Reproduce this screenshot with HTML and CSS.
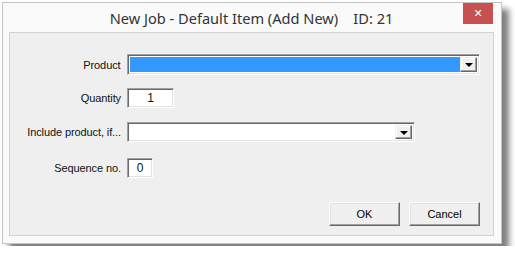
FILE: index.html
```html
<!DOCTYPE html>
<html lang="en">
<head>
    <meta charset="UTF-8">
    <title>New Job - Default Item</title>
    <link rel="stylesheet" href="styles.css">
</head>
<body>
    <div class="window">
        <div class="titlebar">
            <span class="title">New Job - Default Item (Add New)&nbsp;&nbsp;&nbsp;&nbsp;ID: 21</span>
            <button class="close">&#x2715;</button>
        </div>
        <div class="panel">
            <div class="row row1">
                <label>Product</label>
                <div class="combo combo-wide">
                    <div class="combo-val selected"></div>
                    <div class="drop"><span class="arrow"></span></div>
                </div>
            </div>
            <div class="row row2">
                <label>Quantity</label>
                <div class="field field-qty">1</div>
            </div>
            <div class="row row3">
                <label>Include product, if...</label>
                <div class="combo combo-mid">
                    <div class="combo-val"></div>
                    <div class="drop"><span class="arrow"></span></div>
                </div>
            </div>
            <div class="row row4">
                <label>Sequence no.</label>
                <div class="field field-seq">0</div>
            </div>
            <div class="buttons">
                <button class="btn">OK</button>
                <button class="btn">Cancel</button>
            </div>
        </div>
    </div>
</body>
</html>
```

FILE: styles.css
```css
body{
    margin: 0;
    padding: 2px;
    background-color: #fff;
}
.window{
    border: 1px solid #c4c4c4;
    background-color: #fafafa;
    box-shadow: 7px 7px 6px rgba(0, 0, 0, 0.5);
    display: flex;
    flex-direction: column;
    padding: 0 7px 7px 6px;
    box-sizing: border-box;
    width: 500px;
    height: 242px;
}
.titlebar{
    height: 29px;
    position: relative;
    display: flex;
    justify-content: center;
    align-items: center;
    flex-shrink: 0;
}
.title{
    font-family: "Noto Sans", sans-serif;
    font-size: 14.6px;
    color: #333;
    margin-top: 1px;
}
.close{
    position: absolute;
    right: 1px;
    top: 0;
    width: 30px;
    height: 21px;
    border: none;
    background-color: #c75050;
    color: #fff;
    font-size: 11px;
    font-weight: bold;
    font-family: "DejaVu Sans", sans-serif;
    padding: 0;
    line-height: 21px;
}
.panel{
    flex: 1;
    border: 1px solid #d2d2d2;
    background-color: #efefef;
    padding: 21px 13px 0 0;
    display: flex;
    flex-direction: column;
    font-family: "Liberation Sans", Arial, sans-serif;
    font-size: 11px;
    color: #111;
}
.row{
    display: flex;
    align-items: center;
}
.row label{
    width: 111px;
    text-align: right;
    margin-right: 6px;
    letter-spacing: -0.1px;
}
.row2{ margin-top: 13px; }
.row3{ margin-top: 14px; }
.row4{ margin-top: 16px; }

/* sunken 3d box */
.combo,.field{
    box-sizing: border-box;
    border: 1px solid;
    border-color: #a0a0a0 #fff #fff #a0a0a0;
    box-shadow: inset 1px 1px 0 #696969, inset -1px -1px 0 #e3e3e3;
    background-color: #fff;
}
.combo{
    display: flex;
    padding: 2px;
    height: 21px;
}
.combo-wide{ width: 355px; }
.combo-mid{ width: 288px; height: 20px; }
.combo-val{
    flex: 1;
}
.selected{
    background-color: #3399ff;
}
.drop{
    width: 17px;
    box-sizing: border-box;
    background-color: #f0f0f0;
    border: 1px solid;
    border-color: #f0f0f0 #696969 #696969 #f0f0f0;
    box-shadow: inset -1px -1px 0 #a0a0a0, inset 1px 1px 0 #fff;
    display: flex;
    justify-content: center;
    align-items: center;
}
.arrow{
    width: 0;
    height: 0;
    border-left: 4px solid transparent;
    border-right: 4px solid transparent;
    border-top: 4px solid #000;
    margin-top: 1px;
}
.field{
    height: 20px;
    line-height: 18px;
    text-align: center;
    font-size: 12px;
}
.field-qty{ width: 47px; }
.field-seq{ width: 26px; }
.buttons{
    display: flex;
    justify-content: flex-end;
    gap: 9px;
    margin-top: 24px;
}
.btn{
    width: 71px;
    height: 24px;
    background-color: #f0f0f0;
    border: 1px solid;
    border-color: #fff #696969 #696969 #fff;
    box-shadow: inset -1px -1px 0 #a0a0a0, inset 1px 1px 0 #e3e3e3;
    font-family: "Liberation Sans", Arial, sans-serif;
    font-size: 11px;
    color: #000;
    padding: 0;
}
```
